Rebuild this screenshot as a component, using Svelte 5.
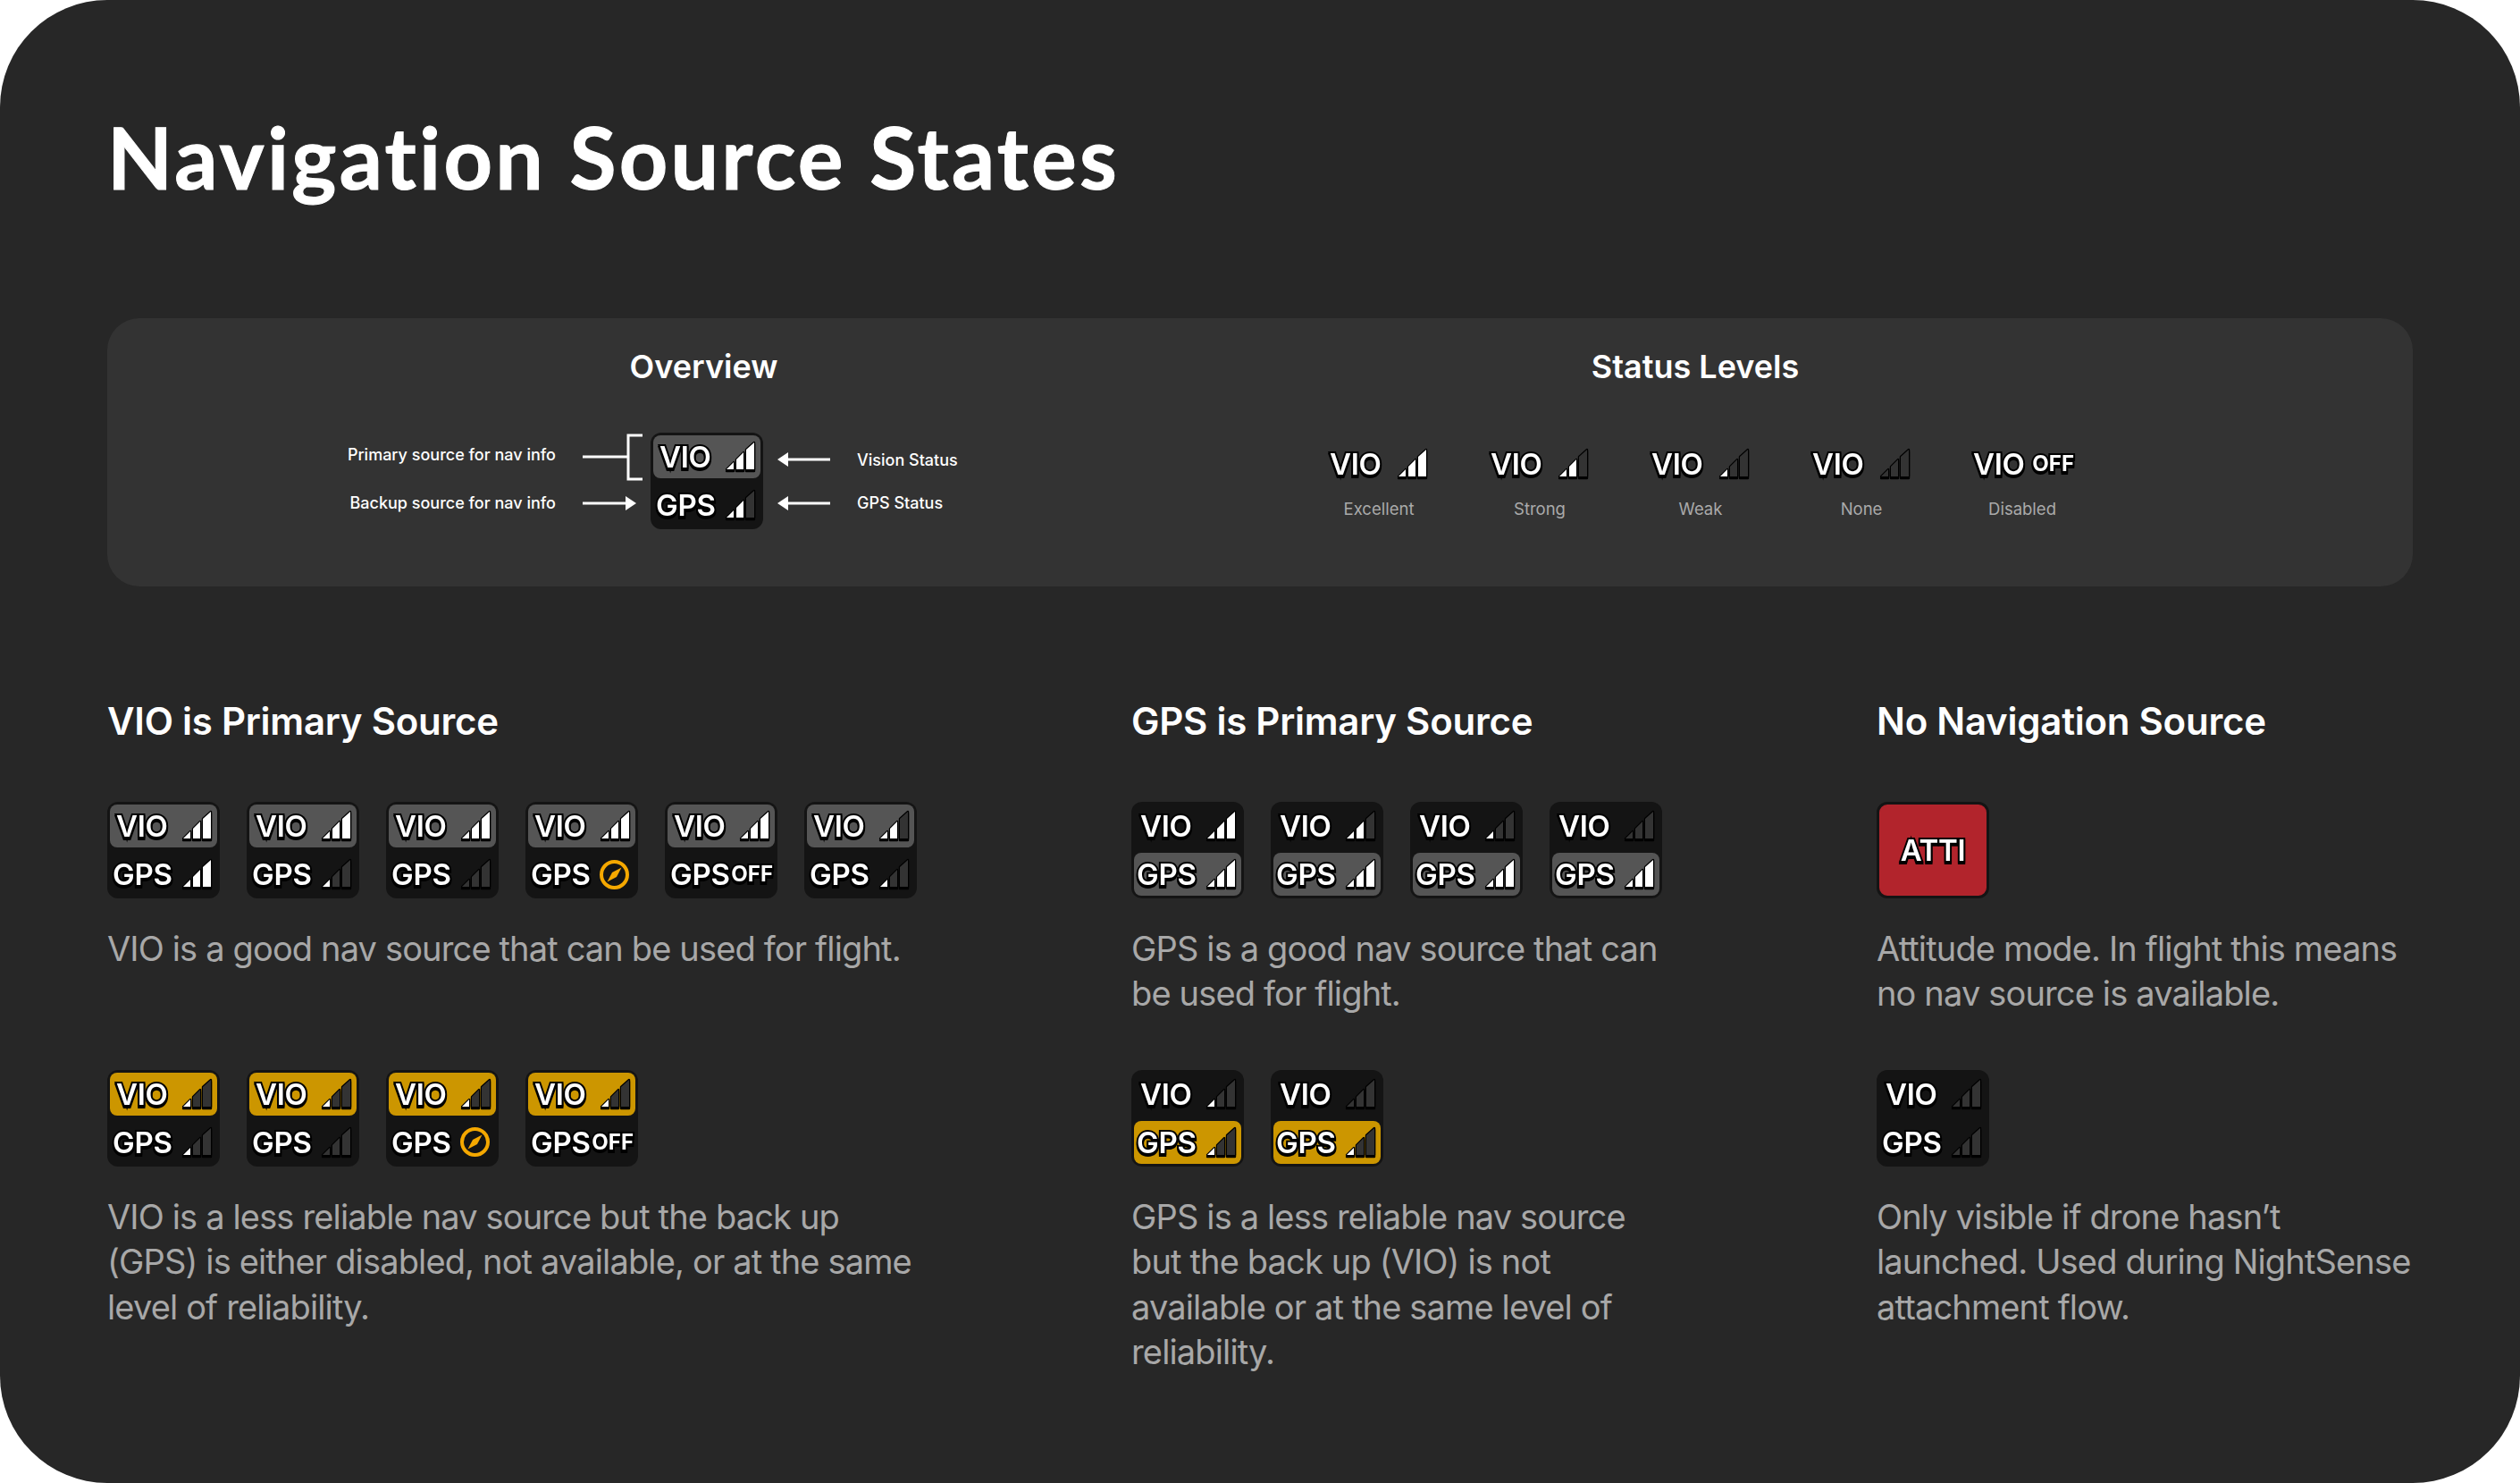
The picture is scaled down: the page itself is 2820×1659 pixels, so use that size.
<script>
  const bars = [
    '0,30 8,22 8,30',
    '11,19 19,11 19,30 11,30',
    '22,8 31,0 31,30 22,30'
  ];

  // top / bottom: [tone, status], status is a lit bar count, 'off' or 'compass'
  const vioRows = [
    [
      { vio: ['grey', 3], gps: ['', 3] },
      { vio: ['grey', 3], gps: ['', 1] },
      { vio: ['grey', 3], gps: ['', 0] },
      { vio: ['grey', 3], gps: ['', 'compass'] },
      { vio: ['grey', 3], gps: ['', 'off'] },
      { vio: ['grey', 2], gps: ['', 1] }
    ],
    [
      { vio: ['amber', 1], gps: ['', 1] },
      { vio: ['amber', 1], gps: ['', 0] },
      { vio: ['amber', 1], gps: ['', 'compass'] },
      { vio: ['amber', 1], gps: ['', 'off'] }
    ]
  ];

  const gpsRows = [
    [
      { vio: ['', 3], gps: ['grey', 3] },
      { vio: ['', 2], gps: ['grey', 3] },
      { vio: ['', 1], gps: ['grey', 3] },
      { vio: ['', 0], gps: ['grey', 3] }
    ],
    [
      { vio: ['', 1], gps: ['amber', 1] },
      { vio: ['', 0], gps: ['amber', 1] }
    ]
  ];

  const levels = [
    { name: 'Excellent', status: 3 },
    { name: 'Strong', status: 2 },
    { name: 'Weak', status: 1 },
    { name: 'None', status: 0 },
    { name: 'Disabled', status: 'off' }
  ];
</script>

{#snippet status(value)}
  {#if value === 'off'}
    <span class="off">OFF</span>
  {:else if value === 'compass'}
    <svg class="compass" viewBox="0 0 33 33" width="33" height="33">
      <circle cx="16.5" cy="16.5" r="14.5" fill="none" stroke="#f5a800" stroke-width="4" />
      <path d="M24.5 8.5 L19 19 L8.5 24.5 L14 14 Z" fill="#f5a800" />
    </svg>
  {:else}
    <svg class="signal" viewBox="-2 -2 35 36" width="35" height="36">
      {#each bars as points, i}
        <polygon {points} class:lit={i < value} />
      {/each}
    </svg>
  {/if}
{/snippet}

{#snippet badge(item)}
  <div class="badge">
    <div class="row vio {item.vio[0]}">
      <span class="label">VIO</span>
      {@render status(item.vio[1])}
    </div>
    <div class="row gps {item.gps[0]}">
      <span class="label">GPS</span>
      {@render status(item.gps[1])}
    </div>
  </div>
{/snippet}

<main>
  <h1>Navigation Source States</h1>

  <section class="panel">
    <div class="overview">
      <h2>Overview</h2>
      <div class="diagram">
        <div class="notes left">
          <span>Primary source for nav info</span>
          <span>Backup source for nav info</span>
        </div>
        <svg class="wires-left" viewBox="0 0 70 109" width="70" height="109">
          <path d="M0 27H51M67 3H51V52H67M0 79H50" fill="none" stroke="#fff" stroke-width="3" />
          <polygon points="48,71 60,79 48,87" fill="#fff" />
        </svg>
        {@render badge({ vio: ['grey', 3], gps: ['', 2] })}
        <svg class="wires-right" viewBox="0 0 59 109" width="59" height="109">
          <path d="M10 30H59M10 79H59" fill="none" stroke="#fff" stroke-width="3" />
          <polygon points="0,30 12,22 12,38" fill="#fff" />
          <polygon points="0,79 12,71 12,87" fill="#fff" />
        </svg>
        <div class="notes right">
          <span>Vision Status</span>
          <span>GPS Status</span>
        </div>
      </div>
    </div>

    <div class="levels">
      <h2>Status Levels</h2>
      <div class="level-grid">
        {#each levels as level}
          <div class="level">
            <div class="row vio bare">
              <span class="label">VIO</span>
              {@render status(level.status)}
            </div>
            <span class="level-name">{level.name}</span>
          </div>
        {/each}
      </div>
    </div>
  </section>

  <section class="sources">
    <h3>VIO is Primary Source</h3>
    <h3>GPS is Primary Source</h3>
    <h3>No Navigation Source</h3>

    <div class="block">
      <div class="badges">
        {#each vioRows[0] as item}{@render badge(item)}{/each}
      </div>
      <p>VIO is a good nav source that can be used for flight.</p>
    </div>
    <div class="block">
      <div class="badges">
        {#each gpsRows[0] as item}{@render badge(item)}{/each}
      </div>
      <p class="narrow">GPS is a good nav source that can be used for flight.</p>
    </div>
    <div class="block">
      <div class="badges">
        <div class="atti"><span class="label">ATTI</span></div>
      </div>
      <p>Attitude mode. In flight this means no nav source is available.</p>
    </div>

    <div class="block">
      <div class="badges">
        {#each vioRows[1] as item}{@render badge(item)}{/each}
      </div>
      <p class="wide">VIO is a less reliable nav source but the back up (GPS) is either disabled, not available, or at the same level of reliability.</p>
    </div>
    <div class="block">
      <div class="badges">
        {#each gpsRows[1] as item}{@render badge(item)}{/each}
      </div>
      <p class="narrow">GPS is a less reliable nav source but the back up (VIO) is not available or at the same level of reliability.</p>
    </div>
    <div class="block">
      <div class="badges">
        {@render badge({ vio: ['', 0], gps: ['', 0] })}
      </div>
      <p>Only visible if drone hasn’t launched. Used during NightSense attachment flow.</p>
    </div>
  </section>
</main>

<style>
  :global(body) {
    background: #fff;
  }
  main {
    box-sizing: border-box;
    width: 2820px;
    height: 1659px;
    padding: 120px 120px 0;
    background: #272727;
    border-radius: 120px;
    font-family: Inter, "Noto Sans", sans-serif;
    color: #fff;
  }
  h1 {
    margin: 0 0 126px;
    font-family: Lato, Inter, sans-serif;
    font-size: 95px;
    line-height: 110px;
    font-weight: 700;
    letter-spacing: 3.25px;
    font-variant-ligatures: none;
    -webkit-text-stroke: 1px #fff;
  }
  h2 {
    margin: 0;
    font-size: 36px;
    line-height: 44px;
    font-weight: 600;
    text-align: center;
  }
  h3 {
    margin: 0 0 62px;
    font-size: 42px;
    line-height: 56px;
    font-weight: 600;
    letter-spacing: -0.25px;
  }

  .panel {
    display: flex;
    box-sizing: border-box;
    height: 300px;
    padding-top: 32px;
    background: #333;
    border-radius: 36px;
  }
  .overview {
    width: 1333px;
  }
  .overview h2 {
    margin-bottom: 52px;
    padding-left: 2px;
  }
  .diagram {
    display: flex;
    margin-left: 270px;
  }
  .notes {
    display: flex;
    flex-direction: column;
    font-size: 18px;
    line-height: 24px;
    font-weight: 500;
    white-space: nowrap;
  }
  .notes.left {
    width: 232px;
    padding-top: 13px;
    gap: 30px;
    align-items: flex-end;
  }
  .notes.right {
    padding-top: 19px;
    gap: 24px;
    margin-left: 30px;
  }
  .wires-left {
    margin: 0 6px 0 30px;
  }
  .wires-right {
    margin-left: 16px;
  }

  .levels {
    width: 900px;
  }
  .levels h2 {
    margin-bottom: 63px;
    padding-right: 12px;
  }
  .level-grid {
    display: grid;
    grid-template-columns: repeat(5, 180px);
  }
  .level {
    display: flex;
    flex-direction: column;
    align-items: center;
  }
  .level .row {
    width: 110px;
  }
  .level-name {
    margin-top: 14px;
    font-size: 18.5px;
    line-height: 24px;
    color: #aaa;
  }

  .badge {
    display: flex;
    flex-direction: column;
    gap: 6px;
    box-sizing: border-box;
    width: 126px;
    height: 108px;
    padding: 3px;
    background: #141414;
    border-radius: 12px;
  }
  .row {
    display: flex;
    align-items: center;
    justify-content: space-between;
    height: 48px;
    padding-right: 5px;
    border-radius: 8px;
  }
  .row.vio {
    padding-left: 7px;
  }
  .row.gps {
    padding-left: 3px;
  }
  .row.bare {
    padding: 0;
  }
  .row.grey {
    background: #555;
  }
  .row.amber {
    background: #cc9600;
  }

  .label,
  .off {
    -webkit-text-stroke: 4px #000;
    paint-order: stroke fill;
    filter: drop-shadow(0 2px 0 #000);
    color: #fff;
  }
  .label {
    font-size: 33px;
    line-height: 40px;
    font-weight: 600;
    letter-spacing: -0.3px;
  }
  .off {
    margin-right: -3px;
    font-size: 24px;
    line-height: 30px;
    font-weight: 700;
  }
  .signal {
    filter: drop-shadow(0 2px 0 #000);
  }
  .signal polygon {
    fill: #333;
    stroke: #000;
    stroke-width: 2.4;
    stroke-linejoin: round;
    paint-order: stroke fill;
  }
  .signal polygon.lit {
    fill: #fff;
  }
  .compass {
    margin-right: 2px;
  }

  .atti {
    display: flex;
    align-items: center;
    justify-content: center;
    box-sizing: border-box;
    width: 126px;
    height: 108px;
    background: #b2242c;
    border: 3px solid #141414;
    border-radius: 12px;
  }

  .sources {
    display: grid;
    grid-template-columns: 1146px 834px 1fr;
    margin-top: 123px;
  }
  .block {
    padding-bottom: 60px;
  }
  .badges {
    display: flex;
    gap: 30px;
  }
  p {
    margin: 31px 0 0;
    font-size: 38px;
    line-height: 50.4px;
    letter-spacing: -0.85px;
    color: #a8a8a8;
  }
  p.wide {
    max-width: 910px;
  }
  p.narrow {
    max-width: 600px;
  }
</style>
